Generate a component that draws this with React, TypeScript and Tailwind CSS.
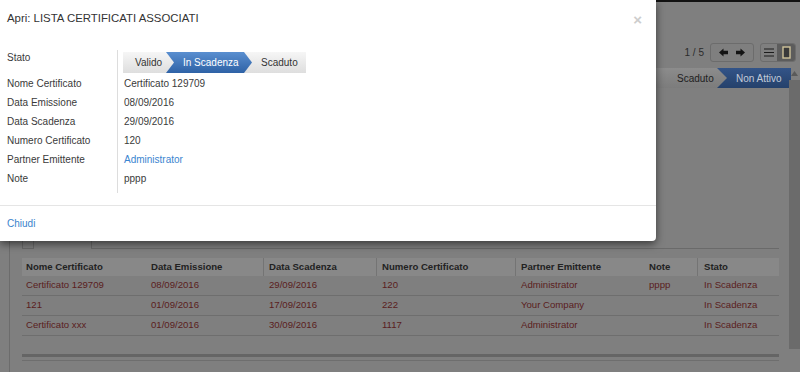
import React from 'react';

const fields = [
  { label: 'Nome Certificato', value: 'Certificato 129709' },
  { label: 'Data Emissione', value: '08/09/2016' },
  { label: 'Data Scadenza', value: '29/09/2016' },
  { label: 'Numero Certificato', value: '120' },
  { label: 'Partner Emittente', value: 'Administrator', link: true },
  { label: 'Note', value: 'pppp' },
];

const rows = [
  ['Certificato 129709', '08/09/2016', '29/09/2016', '120', 'Administrator', 'pppp', 'In Scadenza'],
  ['121', '01/09/2016', '17/09/2016', '222', 'Your Company', '', 'In Scadenza'],
  ['Certificato xxx', '01/09/2016', '30/09/2016', '1117', 'Administrator', '', 'In Scadenza'],
];

const cols = [
  'w-[125px] pl-[4px]',
  'w-[116px] pl-[4px]',
  'w-[113px] pl-[5px]',
  'w-[139px] pl-[5px]',
  'w-[120px] pl-[5px]',
  'w-[62px] pl-[14px]',
  'w-[82px] pl-[6px]',
];
const headSep = [false, false, true, true, true, false, true];
const heads = ['Nome Certificato', 'Data Emissione', 'Data Scadenza', 'Numero Certificato', 'Partner Emittente', 'Note', 'Stato'];

function ArrowIcon({ dir }: { dir: 'left' | 'right' }) {
  return (
    <svg width="9" height="9" viewBox="0 0 10 10">
      <polygon
        points={dir === 'left' ? '0,5 5,0.5 5,3 10,3 10,7 5,7 5,9.5' : '10,5 5,0.5 5,3 0,3 0,7 5,7 5,9.5'}
        fill="#141414"
      />
    </svg>
  );
}

function Background() {
  return (
    <div className="flex h-full flex-col">
      <div className="h-[2px] bg-[#121212]" />
      {/* control panel */}
      <div className="mt-[41px] flex h-[19px] items-center justify-end pr-[4px]">
        <span className="mr-[6px] text-[10px] text-[#2b2b2b]">1 / 5</span>
        <div className="flex h-[19px] w-[44px] items-center justify-around rounded-[3px] border border-[#6c6c6c] px-[4px]">
          <ArrowIcon dir="left" />
          <ArrowIcon dir="right" />
        </div>
        <div className="ml-[6px] flex h-[19px] w-[36px] overflow-hidden rounded-[3px] border border-[#6c6c6c]">
          <div className="flex flex-1 items-center justify-center">
            <svg width="10" height="9" viewBox="0 0 10 9">
              <path d="M0 1h10M0 4.5h10M0 8h10" stroke="#1c1c1c" strokeWidth="1.2" />
            </svg>
          </div>
          <div className="flex w-[18px] items-center justify-center bg-[#5c5c5c]">
            <svg width="9" height="13" viewBox="0 0 9 13">
              <rect x="1" y="1" width="7" height="11" fill="#3a3a3a" stroke="#cfc39a" strokeWidth="1.4" />
            </svg>
          </div>
        </div>
      </div>
      {/* status bar */}
      <div className="mt-[6px] flex h-[20px] justify-end pr-[9px]">
        <div className="relative z-10 flex w-[72px] items-center bg-gradient-to-b from-[#8c8c8c] to-[#7c7c7c] pl-[22px] text-[10px] text-[#1e1e1e] [clip-path:polygon(0_0,calc(100%-10px)_0,100%_50%,calc(100%-10px)_100%,0_100%)]">
          Scaduto
        </div>
        <div className="-ml-[10px] flex w-[74px] items-center bg-gradient-to-b from-[#335488] to-[#25416b] pl-[19px] text-[10px] text-[#c3cbd9]">
          Non Attivo
        </div>
      </div>
      {/* sheet */}
      <div className="ml-[9px] mt-[152px] flex-1 border-l border-[#6c6c6c] pl-[12px] pr-[21px]">
        <div className="flex h-[9px]">
          <div className="w-[11px] border-b border-l border-[#6a6a6a]" />
          <div className="w-[59px] border-x border-[#6a6a6a]" />
          <div className="flex-1 border-b border-[#6a6a6a]" />
        </div>
        <div className="mt-[9px] text-[9.6px]">
          <div className="flex h-[18px] bg-[#888888] font-bold text-[#222]">
            {heads.map((h, i) => (
              <div key={h} className={`${cols[i]} flex items-center ${headSep[i] ? 'border-l border-[#747474]' : ''}`}>
                {h}
              </div>
            ))}
          </div>
          {rows.map((r, ri) => (
            <div key={ri} className="flex h-[20px] border-b border-[#6e6e6e] text-[#5a1d1d]">
              {r.map((c, i) => (
                <div key={i} className={`${cols[i]} flex items-center ${headSep[i] ? 'border-l border-transparent' : ''}`}>
                  {c}
                </div>
              ))}
            </div>
          ))}
          <div className="mt-[18px] h-[3px] bg-[#656565]" />
          <div className="mt-[3px] h-px bg-[#6e6e6e]" />
        </div>
      </div>
    </div>
  );
}

function Modal() {
  return (
    <div className="absolute left-0 top-0 z-20 w-[656px] rounded-br-[4px] bg-white shadow-[0_3px_9px_rgba(0,0,0,0.55)]">
      <div className="flex h-[38px] items-center justify-between pl-[7px] pr-[14px]">
        <span className="text-[11.4px] text-[#333]">Apri: LISTA CERTIFICATI ASSOCIATI</span>
        <span className="text-[15px] font-bold leading-none text-[#cdcdcd]">×</span>
      </div>
      <div className="px-[7px] pb-[12px] pt-[12px] text-[10px] text-[#3a3a3a]">
        <div className="flex">
          <div className="w-[111px] border-r border-[#dddddd] pb-[5px]">
            <div className="h-[24px] leading-[16px]">Stato</div>
            {fields.map((f) => (
              <div key={f.label} className="h-[19px] leading-[19px]">
                {f.label}
              </div>
            ))}
          </div>
          <div className="pl-[5px]">
            <div className="h-[24px] pt-[2px]">
              <div className="flex h-[21px] text-[10px]">
                <div className="relative z-20 flex w-[51px] items-center bg-gradient-to-b from-[#f6f6f6] to-[#dedede] pl-[12px] text-[#333] [clip-path:polygon(0_0,calc(100%-8px)_0,100%_50%,calc(100%-8px)_100%,0_100%)]">
                  Valido
                </div>
                <div className="relative z-10 -ml-[8px] flex w-[86px] items-center bg-gradient-to-b from-[#5a8fd0] to-[#2e62a6] pl-[17px] text-white [clip-path:polygon(0_0,calc(100%-8px)_0,100%_50%,calc(100%-8px)_100%,0_100%)]">
                  In Scadenza
                </div>
                <div className="-ml-[8px] flex w-[62px] items-center bg-gradient-to-b from-[#f6f6f6] to-[#dedede] pl-[17px] text-[#333]">
                  Scaduto
                </div>
              </div>
            </div>
            {fields.map((f) => (
              <div key={f.label} className={`h-[19px] pl-px leading-[19px] ${f.link ? 'text-[#3a85d0]' : ''}`}>
                {f.value}
              </div>
            ))}
          </div>
        </div>
      </div>
      <div className="flex h-[36px] items-center border-t border-[#e5e5e5] pl-[7px] text-[10px] text-[#3a84cc]">
        Chiudi
      </div>
    </div>
  );
}

export default function App() {
  return (
    <div className="relative h-[372px] w-[800px] overflow-hidden bg-[#7f7f7f] font-['Liberation_Sans',Arial,sans-serif]">
      <Background />
      {/* scrollbar */}
      <div className="absolute right-0 top-[68px] flex h-[281px] w-[11px] flex-col items-center">
        <svg width="7" height="5" viewBox="0 0 7 5" className="mt-[3px]">
          <polygon points="0,5 3.5,0 7,5" fill="#5a5a5a" />
        </svg>
        <div className="mt-[4px] w-full flex-1 bg-[#6b6b6b]" />
      </div>
      <Modal />
    </div>
  );
}
